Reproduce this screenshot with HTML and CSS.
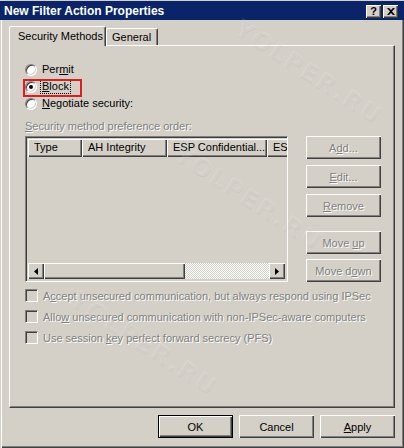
FILE: index.html
```html
<!DOCTYPE html>
<html>
<head>
<meta charset="utf-8">
<title>New Filter Action Properties</title>
<link rel="stylesheet" href="styles.css">
</head>
<body>
<div class="window">
  <div class="titlebar">
    <span class="title">New Filter Action Properties</span>
    <div class="tbtns">
      <span class="tbtn help">?</span>
      <span class="tbtn close"><svg width="8" height="7" viewBox="0 0 8 7"><path d="M0 0h2l2 2 2-2h2L5 3.5 8 7H6L4 5 2 7H0l3-3.5z" fill="#000"/></svg></span>
    </div>
  </div>
  <div class="client">
    <div class="tabs">
      <div class="tab active">Security Methods</div>
      <div class="tab">General</div>
    </div>
    <div class="panel">
      <div class="radios">
        <div class="radio"><span class="rb"></span><span class="rlabel">Per<u>m</u>it</span></div>
        <div class="radio sel"><span class="rb on"></span><span class="rlabel focus"><u>B</u>lock</span><span class="mark"></span></div>
        <div class="radio"><span class="rb"></span><span class="rlabel"><u>N</u>egotiate security:</span></div>
      </div>
      <div class="grouplabel dis"><u>S</u>ecurity method preference order:</div>
      <div class="listrow">
        <div class="list">
          <div class="lhead">
            <div class="hc c1">Type</div>
            <div class="hc c2">AH Integrity</div>
            <div class="hc c3">ESP Confidential...</div>
            <div class="hc c4">ES</div>
          </div>
          <div class="lbody"></div>
          <div class="hscroll">
            <div class="sbtn"><svg width="4" height="7" viewBox="0 0 4 7"><path d="M4 0v7L0 3.5z" fill="#000"/></svg></div>
            <div class="thumb"></div>
            <div class="track"></div>
            <div class="sbtn"><svg width="4" height="7" viewBox="0 0 4 7"><path d="M0 0v7L4 3.5z" fill="#000"/></svg></div>
          </div>
        </div>
        <div class="sidebtns">
          <div class="btn dis b-add"><span>A<u>d</u>d...</span></div>
          <div class="btn dis b-edit"><span><u>E</u>dit...</span></div>
          <div class="btn dis b-remove"><span><u>R</u>emove</span></div>
          <div class="btn dis b-up"><span>Move <u>u</u>p</span></div>
          <div class="btn dis b-down"><span>Move d<u>o</u>wn</span></div>
        </div>
      </div>
      <div class="checks">
        <div class="check"><span class="cb"></span><span class="dis">A<u>c</u>cept unsecured communication, but always respond using IPSec</span></div>
        <div class="check"><span class="cb"></span><span class="dis">Allo<u>w</u> unsecured communication with non-IPSec-aware computers</span></div>
        <div class="check"><span class="cb"></span><span class="dis">Use session <u>k</u>ey perfect forward secrecy (PFS)</span></div>
      </div>
    </div>
    <div class="footer">
      <div class="btn default"><span>OK</span></div>
      <div class="btn"><span>Cancel</span></div>
      <div class="btn"><span><u>A</u>pply</span></div>
    </div>
  </div>
  <div class="wm wm1">YOLPER.RU</div>
  <div class="wm wm2">YOLPER.RU</div>
  <div class="wm wm4">YOLPER.RU</div>
</div>
</body>
</html>
```

FILE: styles.css
```css
* { box-sizing: border-box; }
html, body { margin: 0; padding: 0; }
body {
  width: 404px;
  height: 448px;
  overflow: hidden;
  background: #d4d0c8;
  font-family: "Liberation Sans", Arial, sans-serif;
  font-size: 11px;
  color: #000;
}
u { text-decoration: underline; text-underline-offset: 1px; }

.window {
  position: relative;
  width: 404px;
  height: 448px;
  background: #d4d0c8;
  overflow: hidden;
  box-shadow: inset 1px 0 #d4d0c8, inset 2px 0 #fff, inset -1px -1px #404040, inset -2px -2px #808080;
}

.titlebar {
  height: 20px;
  background: #0a246a;
  border-top: 1px solid #d4d0c8;
  display: flex;
  align-items: center;
  justify-content: space-between;
  padding: 0 6px 0 4px;
}
.title {
  color: #fff;
  font-weight: bold;
  font-size: 12px;
}
.tbtns { display: flex; gap: 2px; margin-top: 1px; }
.tbtn {
  width: 15px;
  height: 13px;
  background: #d4d0c8;
  display: flex;
  align-items: center;
  justify-content: center;
  box-shadow: inset 1px 1px #fff, inset -1px -1px #404040, inset -2px -2px #808080;
  font-weight: bold;
  font-size: 11px;
  line-height: 1;
}

.client {
  padding: 6px 9px 0 9px;
}

.tabs {
  display: flex;
  align-items: flex-end;
  height: 19px;
  position: relative;
  z-index: 2;
}
.tab {
  height: 17px;
  padding: 2px 6px 0 5px;
  border-left: 1px solid #fff;
  border-top: 1px solid #fff;
  border-right: 1px solid #404040;
  box-shadow: inset -1px 0 #808080;
  border-radius: 2px 2px 0 0;
  background: #d4d0c8;
  white-space: nowrap;
}
.tab.active {
  height: 20px;
  margin-bottom: -1px;
  padding: 3px 8px 0 8px;
  width: 97px;
}

.panel {
  height: 363px;
  border-top: 1px solid #fff;
  border-left: 1px solid #fff;
  border-right: 1px solid #404040;
  border-bottom: 1px solid #404040;
  box-shadow: inset -1px -1px #808080;
  padding: 15px 0 0 15px;
  position: relative;
}

.radios { display: flex; flex-direction: column; }
.radio {
  height: 17px;
  display: flex;
  align-items: center;
  position: relative;
}
.rb {
  width: 12px;
  height: 12px;
  border-radius: 50%;
  background: #fff;
  border: 1px solid;
  border-color: #808080 #fff #fff #808080;
  box-shadow: inset 1px 1px #404040, inset -1px -1px #d4d0c8;
  margin-right: 5px;
  position: relative;
  flex: none;
}
.rb.on::after {
  content: "";
  position: absolute;
  left: 3px;
  top: 3px;
  width: 4px;
  height: 4px;
  border-radius: 50%;
  background: #000;
}
.rlabel { line-height: 13px; }
.focus { outline: 1px dotted #000; margin-left: -1px; padding: 0 1px; }
.mark {
  position: absolute;
  left: -2px;
  top: 1px;
  width: 59px;
  height: 18px;
  border: 2px solid #e31b1b;
}

.dis { color: #808080; text-shadow: 1px 1px 0 #fff; }

.grouplabel {
  margin-top: 8px;
  height: 13px;
  line-height: 13px;
}

.listrow {
  display: flex;
  margin-top: 3px;
  gap: 18px;
}
.list {
  width: 263px;
  height: 146px;
  border: 1px solid;
  border-color: #808080 #fff #fff #808080;
  box-shadow: inset 1px 1px #404040, inset -1px -1px #d4d0c8;
  padding: 2px;
  display: flex;
  flex-direction: column;
  overflow: hidden;
}
.lhead {
  display: flex;
  height: 18px;
  flex: none;
}
.hc {
  height: 18px;
  padding: 2px 0 0 6px;
  white-space: nowrap;
  overflow: hidden;
  box-shadow: inset 1px 1px #fff, inset -1px -1px #404040, inset -2px -2px #808080;
  flex: none;
}
.c1 { width: 54px; }
.c2 { width: 85px; }
.c3 { width: 100px; }
.c4 { width: 30px; }
.lbody { flex: 1; }
.hscroll { display: flex; height: 16px; flex: none; }
.sbtn {
  width: 16px;
  height: 16px;
  flex: none;
  background: #d4d0c8;
  box-shadow: inset 1px 1px #fff, inset -1px -1px #404040, inset -2px -2px #808080;
  display: flex;
  align-items: center;
  justify-content: center;
}
.thumb {
  width: 141px;
  flex: none;
  background: #d4d0c8;
  box-shadow: inset 1px 1px #fff, inset -1px -1px #404040, inset -2px -2px #808080;
}
.track {
  flex: 1;
  background: repeating-conic-gradient(#fff 0 25%, #d4d0c8 0 50%) 0 0 / 2px 2px;
}

.sidebtns {
  display: flex;
  flex-direction: column;
  width: 75px;
}
.btn {
  width: 75px;
  height: 23px;
  display: flex;
  align-items: center;
  justify-content: center;
  background: #d4d0c8;
  box-shadow: inset 1px 1px #fff, inset -1px -1px #404040, inset -2px -2px #808080;
  white-space: nowrap;
}
.b-edit, .b-remove { margin-top: 6px; }
.b-up { margin-top: 14px; }
.b-down { margin-top: 5px; }

.checks { margin-top: 3px; display: flex; flex-direction: column; }
.check { height: 21px; display: flex; align-items: center; }
.cb {
  width: 13px;
  height: 13px;
  border: 1px solid;
  border-color: #808080 #fff #fff #808080;
  box-shadow: inset 1px 1px #404040, inset -1px -1px #d4d0c8;
  background: #d4d0c8;
  margin-right: 5px;
  flex: none;
}

.footer {
  display: flex;
  justify-content: flex-end;
  gap: 6px;
  margin-top: 7px;
}
.btn.default {
  border: 1px solid #000;
}

.wm {
  position: absolute;
  font-family: "DejaVu Sans", sans-serif;
  font-weight: bold;
  font-size: 24px;
  color: rgba(255, 255, 255, 0.14);
  text-shadow: 1px 1px 0 rgba(0, 0, 0, 0.035);
  transform: rotate(33deg);
  transform-origin: 0 0;
  white-space: nowrap;
  pointer-events: none;
  letter-spacing: 2px;
}
.wm1 { left: 245px; top: 14px; }
.wm2 { left: 185px; top: 140px; }
.wm4 { left: 80px; top: 285px; }
```
